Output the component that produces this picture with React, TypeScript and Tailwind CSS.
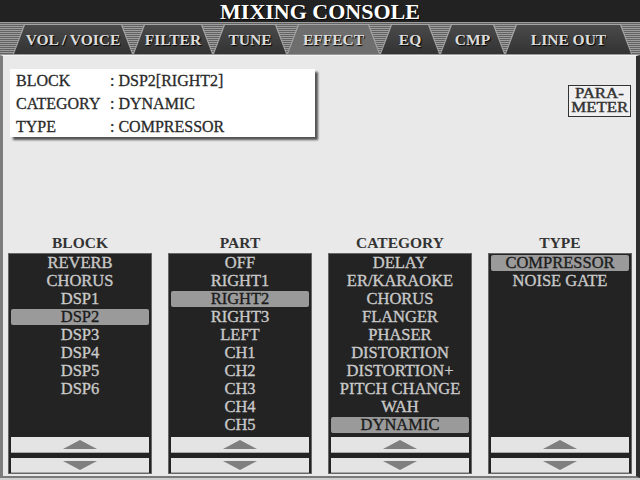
import React from 'react';

const tabs = [
  { label: 'VOL / VOICE', w: 'w-[120px]' },
  { label: 'FILTER', w: 'w-[80px]' },
  { label: 'TUNE', w: 'w-[74px]' },
  { label: 'EFFECT', w: 'w-[93px]', active: true },
  { label: 'EQ', w: 'w-[60px]' },
  { label: 'CMP', w: 'w-[65px]' },
  { label: 'LINE OUT', w: 'w-[127px]' },
];

const columns = [
  {
    title: 'BLOCK',
    items: ['REVERB', 'CHORUS', 'DSP1', 'DSP2', 'DSP3', 'DSP4', 'DSP5', 'DSP6'],
    selected: 'DSP2',
  },
  {
    title: 'PART',
    items: ['OFF', 'RIGHT1', 'RIGHT2', 'RIGHT3', 'LEFT', 'CH1', 'CH2', 'CH3', 'CH4', 'CH5'],
    selected: 'RIGHT2',
  },
  {
    title: 'CATEGORY',
    items: [
      'DELAY',
      'ER/KARAOKE',
      'CHORUS',
      'FLANGER',
      'PHASER',
      'DISTORTION',
      'DISTORTION+',
      'PITCH CHANGE',
      'WAH',
      'DYNAMIC',
    ],
    selected: 'DYNAMIC',
  },
  {
    title: 'TYPE',
    items: ['COMPRESSOR', 'NOISE GATE'],
    selected: 'COMPRESSOR',
  },
];

const info = [
  ['BLOCK', ': DSP2[RIGHT2]'],
  ['CATEGORY', ': DYNAMIC'],
  ['TYPE', ': COMPRESSOR'],
];

const Tab = ({ label, w, active }: { label: string; w: string; active?: boolean }) => (
  <div
    className={`${w} h-[30px] shrink-0 bg-[#a4a4a4] px-[1px] pt-[1px] [clip-path:polygon(11px_0,calc(100%_-_11px)_0,100%_100%,0_100%)]`}
  >
    <div
      className={`flex h-full items-center justify-center text-[15.5px] font-bold leading-none text-[#dcdcdc] [text-shadow:1px_1px_1px_#000] [clip-path:polygon(11px_0,calc(100%_-_11px)_0,100%_100%,0_100%)] ${
        active ? 'bg-[#6e6e6e]' : 'bg-[linear-gradient(#4a4a4a,#333)]'
      }`}
    >
      {label}
    </div>
  </div>
);

const ArrowButton = ({ up }: { up?: boolean }) => (
  <div
    className={`mx-[2px] flex items-center justify-center border-b border-[#a8a8a8] bg-[#e4e4e4] ${
      up ? 'h-[16px]' : 'h-[15px]'
    }`}
  >
    <svg width="34" height="9" viewBox="0 0 34 9">
      {up ? (
        <polygon points="0,9 17,0 34,9" fill="#7f7f7f" />
      ) : (
        <polygon points="0,0 34,0 17,9" fill="#7f7f7f" />
      )}
    </svg>
  </div>
);

const ListPanel = ({
  title,
  items,
  selected,
}: {
  title: string;
  items: string[];
  selected: string;
}) => (
  <div className="flex flex-col">
    <div className="mb-[1px] h-[18px] text-center text-[15.5px] font-bold leading-[18px] text-[#333]">
      {title}
    </div>
    <div className="flex h-[221px] flex-col border border-[#666] bg-[#232323]">
      <div className="h-[180px]">
        {items.map((item) => (
          <div key={item} className="h-[18px] px-[2px] py-[1px]">
            <div
              className={`h-[16px] whitespace-nowrap rounded-[2px] text-center text-[16.5px] leading-[16px] [-webkit-text-stroke:0.35px_currentColor] ${
                item === selected ? 'bg-[#9a9a9a] text-[#1c1c1c]' : 'text-[#c9c9c9]'
              }`}
            >
              {item}
            </div>
          </div>
        ))}
      </div>
      <div className="mt-[3px]">
        <ArrowButton up />
      </div>
      <div className="mt-[5px]">
        <ArrowButton />
      </div>
    </div>
  </div>
);

export default function App() {
  return (
    <div className="flex h-[480px] w-[640px] flex-col overflow-hidden bg-[#e9e9e9] [font-family:'Liberation_Serif',serif]">
      <div className="flex h-[22px] shrink-0 items-start justify-center bg-[#222]">
        <div className="h-[22px] text-[22px] font-bold leading-[24.5px] text-white [text-shadow:1px_1px_1px_#000]">
          MIXING CONSOLE
        </div>
      </div>

      <div className="flex h-[33px] shrink-0 items-end bg-[repeating-linear-gradient(to_bottom,#9c9c9c_0,#9c9c9c_1px,#626262_1px,#626262_2px)] pl-[13px] pb-[1px]">
        {tabs.map((t) => (
          <Tab key={t.label} {...t} />
        ))}
      </div>

      <div className="flex flex-1 flex-col border-t border-b-2 border-l-[3px] border-r-4 border-t-[#f4f4f4] border-b-[#7a7a7a] border-l-[#7c7c7c] border-r-[#2e2e2e] px-[5px] pb-[2px]">
        <div className="flex items-start">
          <div className="ml-[2px] mt-[13px] h-[68px] w-[305px] bg-white text-[16px] leading-[23px] text-[#2a2a2a] shadow-[3px_3px_2px_#555] [-webkit-text-stroke:0.3px_currentColor]">
            {info.map(([k, v]) => (
              <div key={k} className="flex h-[23px] pl-[6px]">
                <span className="w-[94px]">{k}</span>
                <span>{v}</span>
              </div>
            ))}
          </div>
          <div className="ml-auto mt-[29px] flex h-[32px] w-[63px] flex-col items-center justify-center border border-[#333] bg-[#f0f0f0] text-[14px] leading-[14px] text-[#333] [-webkit-text-stroke:0.4px_currentColor]">
            <span className="inline-block scale-x-[1.2]">PARA-</span>
            <span className="inline-block scale-x-[1.2]">METER</span>
          </div>
        </div>

        <div className="mt-auto grid grid-cols-[144px_144px_144px_144px] gap-x-[16px]">
          {columns.map((c) => (
            <ListPanel key={c.title} {...c} />
          ))}
        </div>
      </div>
      <div className="h-[2px] shrink-0 bg-[#d0d0d0]" />
    </div>
  );
}
